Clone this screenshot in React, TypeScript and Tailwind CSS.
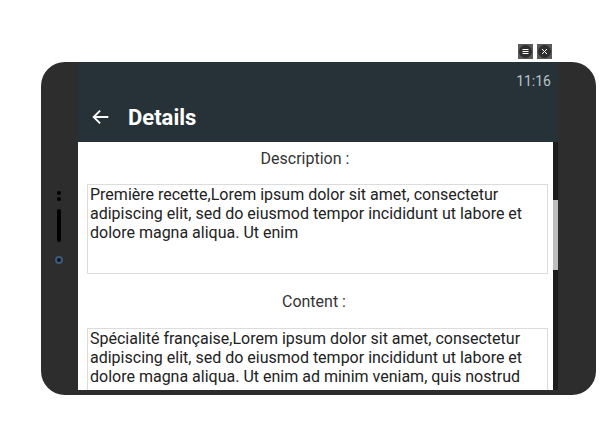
import React from "react";

function FrameButton({ kind }: { kind: "menu" | "close" }) {
  return (
    <div className="w-[15px] h-[15px] bg-[#5a5a5a] flex items-center justify-center">
      <div className="w-[13px] h-[13px] rounded-full bg-[#2e2e2e] flex items-center justify-center">
        {kind === "menu" ? (
          <svg width="7" height="7" viewBox="0 0 7 7">
            <path d="M0.5 1.5h6M0.5 3.5h6M0.5 5.5h6" stroke="#fff" strokeWidth="1" />
          </svg>
        ) : (
          <svg width="7" height="7" viewBox="0 0 7 7">
            <path d="M1 1l5 5M6 1l-5 5" stroke="#fff" strokeWidth="1" />
          </svg>
        )}
      </div>
    </div>
  );
}

export default function App() {
  const desc =
    "Première recette,Lorem ipsum dolor sit amet, consectetur adipiscing elit, sed do eiusmod tempor incididunt ut labore et dolore magna aliqua. Ut enim";
  const content =
    "Spécialité française,Lorem ipsum dolor sit amet, consectetur adipiscing elit, sed do eiusmod tempor incididunt ut labore et dolore magna aliqua. Ut enim ad minim veniam, quis nostrud";

  return (
    <div
      className="w-[616px] h-[422px] bg-white flex flex-col pl-[41px] pt-[44px]"
      style={{ fontFamily: "Roboto, 'Liberation Sans', sans-serif" }}
    >
      {/* frame controls */}
      <div className="w-[555px] h-[16px] flex justify-end gap-[4px] pr-[44px]">
        <FrameButton kind="menu" />
        <FrameButton kind="close" />
      </div>

      {/* device */}
      <div className="mt-[2px] w-[555px] h-[333px] bg-[#2d2d2d] rounded-[24px] flex">
        <div className="w-[37px] flex flex-col items-center pt-[129px] pr-[2px]">
          <div className="w-[4px] h-[4px] rounded-full bg-black" />
          <div className="w-[4px] h-[4px] rounded-full bg-black mt-[2px]" />
          <div className="w-[4px] h-[33px] rounded-full bg-black mt-[8px]" />
          <div className="w-[8px] h-[8px] rounded-full bg-[#0b1522] border-[2px] border-[#3d5a78] mt-[14px]" />
        </div>

        <div className="w-[480px] h-[328px] flex flex-col">
          <div className="h-[38px] bg-[#263238] flex items-center justify-end pr-[7px]">
            <span className="text-[14px] text-[#b8c4c9]">11:16</span>
          </div>
          <div className="h-[42px] bg-[#263238] flex items-center pb-[8px] pl-[12px]">
            <svg width="22" height="22" viewBox="0 0 24 24" fill="none">
              <path d="M20 12H4.5M11 5l-7 7 7 7" stroke="#fff" strokeWidth="2" />
            </svg>
            <span className="ml-[16px] text-[22px] font-bold text-white">Details</span>
          </div>

          <div className="flex-1 flex overflow-hidden">
            <div className="flex-1 bg-white pl-[9px] pr-[5px] pt-[7px] overflow-hidden">
              <div className="text-center text-[16px] leading-[20px] text-[#333] pr-[25px]">
                Description :
              </div>
              <div className="mt-[15px] h-[90px] border border-[#dcdcdc] pl-[2px] text-[16px] leading-[19px] text-[#222]">
                {desc}
              </div>
              <div className="mt-[18px] text-center text-[16px] leading-[20px] text-[#333] pr-[7px]">
                Content :
              </div>
              <div className="mt-[16px] h-[62px] border-x border-t border-[#dcdcdc] pl-[2px] text-[16px] leading-[19px] text-[#222]">
                {content}
              </div>
            </div>
            <div className="w-[5px] bg-[#1c1c1c] flex flex-col pt-[58px]">
              <div className="h-[70px] bg-[#bdbdbd]" />
            </div>
          </div>
        </div>
      </div>
    </div>
  );
}
